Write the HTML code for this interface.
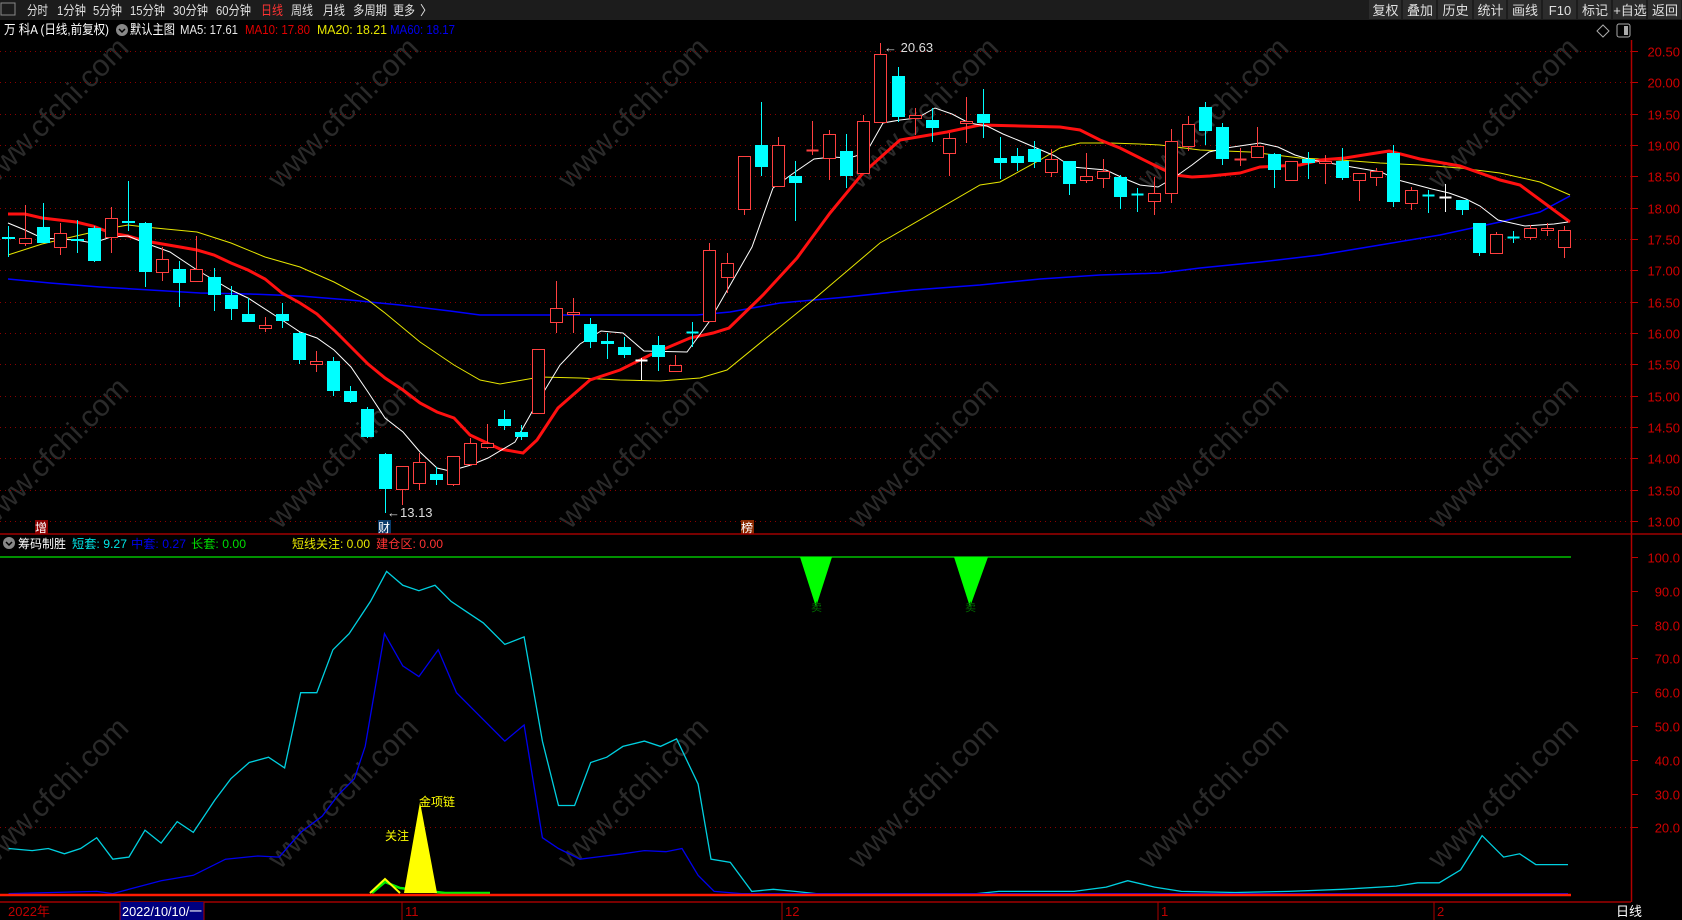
<!DOCTYPE html>
<html><head><meta charset="utf-8">
<style>
html,body{margin:0;padding:0;background:#000;width:1682px;height:920px;overflow:hidden;font-family:"Liberation Sans","Noto Sans CJK SC",sans-serif;}
svg{display:block}
</style></head>
<body>
<svg id="s" width="1682" height="920" xmlns="http://www.w3.org/2000/svg" font-family="Liberation Sans, Noto Sans CJK SC, sans-serif">
<rect width="1682" height="920" fill="#000"/>
<g id="wm" fill="#2a2a2a" font-size="30"></g>
<rect x="0" y="0" width="1682" height="20" fill="#1c1c1c"/>
<g font-size="13" fill="#e0e0e0" lengthAdjust="spacingAndGlyphs">
<rect x="1" y="3" width="14" height="12" fill="none" stroke="#888" stroke-width="1"/>
<text x="27" y="15" textLength="21" lengthAdjust="spacingAndGlyphs">分时</text>
<text x="57" y="15" textLength="29" lengthAdjust="spacingAndGlyphs">1分钟</text>
<text x="93" y="15" textLength="29" lengthAdjust="spacingAndGlyphs">5分钟</text>
<text x="130" y="15" textLength="35" lengthAdjust="spacingAndGlyphs">15分钟</text>
<text x="173" y="15" textLength="35" lengthAdjust="spacingAndGlyphs">30分钟</text>
<text x="216" y="15" textLength="35" lengthAdjust="spacingAndGlyphs">60分钟</text>
<text x="261" y="15" fill="#ff3333" textLength="22" lengthAdjust="spacingAndGlyphs">日线</text>
<text x="291" y="15" textLength="22" lengthAdjust="spacingAndGlyphs">周线</text>
<text x="323" y="15" textLength="22" lengthAdjust="spacingAndGlyphs">月线</text>
<text x="353" y="15" textLength="34" lengthAdjust="spacingAndGlyphs">多周期</text>
<text x="393" y="15" textLength="22" lengthAdjust="spacingAndGlyphs">更多</text>
<text x="420" y="15">〉</text>
</g>
<g id="btns" font-size="13" fill="#e0e0e0"></g>
<g font-size="13">
<text x="4" y="34" fill="#fff" textLength="105" lengthAdjust="spacingAndGlyphs">万 科A (日线,前复权)</text>
<circle cx="122" cy="30" r="6" fill="#888"/><path d="M119 29 l3 3 l3 -3" stroke="#000" stroke-width="1.5" fill="none"/>
<text x="130" y="34" fill="#fff" textLength="45" lengthAdjust="spacingAndGlyphs">默认主图</text>
<text x="180" y="34" fill="#e8e8e8" textLength="58" lengthAdjust="spacingAndGlyphs">MA5: 17.61</text>
<text x="245" y="34" fill="#e00000" textLength="65" lengthAdjust="spacingAndGlyphs">MA10: 17.80</text>
<text x="317" y="34" fill="#e6e600" textLength="70" lengthAdjust="spacingAndGlyphs">MA20: 18.21</text>
<text x="390" y="34" fill="#0000ee" textLength="65" lengthAdjust="spacingAndGlyphs">MA60: 18.17</text>
</g>
<path d="M1603 25 l6 6 l-6 6 l-6 -6z" fill="none" stroke="#aaa"/>
<rect x="1617" y="24" width="13" height="13" rx="2" fill="none" stroke="#aaa"/><rect x="1624" y="26" width="4" height="9" fill="#aaa"/>
<g id="grid"></g>
<g id="axis"></g>
<g id="mas" fill="none"></g>
<g id="cand"></g>
<g id="low"></g>
<text x="884" y="52" font-size="13" fill="#ddd">← 20.63</text>
<text x="387" y="517" font-size="13" fill="#ddd">←13.13</text>
<rect x="35" y="520" width="13" height="14" fill="#8b0000"/><text x="35" y="532" font-size="12" fill="#fff">增</text>
<rect x="378" y="520" width="13" height="14" fill="#0a3a6a"/><text x="378" y="532" font-size="12" fill="#fff">财</text>
<rect x="741" y="520" width="13" height="14" fill="#8b2a00"/><text x="741" y="532" font-size="12" fill="#fff">榜</text>
<line x1="0" y1="534" x2="1682" y2="534" stroke="#a00000" stroke-width="1.5"/>
<g font-size="12">
<circle cx="9" cy="543" r="6" fill="#888"/><path d="M6 542 l3 3 l3 -3" stroke="#000" stroke-width="1.5" fill="none"/>
<text x="18" y="548" fill="#fff" textLength="48" lengthAdjust="spacingAndGlyphs">筹码制胜</text>
<text x="72" y="548" fill="#00e5e5" textLength="55" lengthAdjust="spacingAndGlyphs">短套: 9.27</text>
<text x="131" y="548" fill="#0000ee" textLength="55" lengthAdjust="spacingAndGlyphs">中套: 0.27</text>
<text x="191" y="548" fill="#00dd00" textLength="55" lengthAdjust="spacingAndGlyphs">长套: 0.00</text>
<text x="292" y="548" fill="#e6e600" textLength="78" lengthAdjust="spacingAndGlyphs">短线关注: 0.00</text>
<text x="376" y="548" fill="#ff3333" textLength="67" lengthAdjust="spacingAndGlyphs">建仓区: 0.00</text>
</g>
<line x1="0" y1="902" x2="1631" y2="902" stroke="#a00000" stroke-width="1.5"/>
<g font-size="13">
<text x="8" y="916" fill="#c00000">2022年</text>
<rect x="120" y="902" width="84" height="18" fill="#000080"/>
<line x1="120" y1="902" x2="120" y2="920" stroke="#a00"/><line x1="204" y1="902" x2="204" y2="920" stroke="#a00"/>
<text x="122" y="916" fill="#fff" textLength="80" lengthAdjust="spacingAndGlyphs">2022/10/10/一</text>
<text x="405" y="916" fill="#c00000">11</text><line x1="402" y1="902" x2="402" y2="920" stroke="#a00"/>
<text x="785" y="916" fill="#c00000">12</text><line x1="782" y1="902" x2="782" y2="920" stroke="#a00"/>
<text x="1161" y="916" fill="#c00000">1</text><line x1="1158" y1="902" x2="1158" y2="920" stroke="#a00"/>
<text x="1437" y="916" fill="#c00000">2</text><line x1="1434" y1="902" x2="1434" y2="920" stroke="#a00"/>
<text x="1616" y="916" fill="#fff">日线</text>
</g>
</svg>
<script>
var NS="http://www.w3.org/2000/svg";
function el(p,t,a,txt){var e=document.createElementNS(NS,t);for(var k in a)e.setAttribute(k,a[k]);if(txt!==undefined)e.textContent=txt;document.getElementById(p).appendChild(e);return e;}
var b=[["复权",1369,1402],["叠加",1403,1437],["历史",1438,1473],["统计",1474,1507],["画线",1508,1542],["F10",1543,1577],["标记",1578,1612],["+自选",1613,1647],["返回",1648,1682]];
b.forEach(function(x){el("btns","rect",{x:x[1],y:0,width:x[2]-x[1]-1,height:19,fill:"#2c2c2c"});el("btns","text",{x:(x[1]+x[2])/2,y:15,"text-anchor":"middle"},x[0]);});
for(var i=0;i<6;i++)for(var j=0;j<3;j++){var wx=-10+i*290,wy=190+j*340;el("wm","text",{x:wx,y:wy,transform:"rotate(-45 "+wx+" "+wy+")"},"www.cfchi.com");}
function py(p){return 51+(20.5-p)*62.67;}
for(var p=20.5;p>=12.99;p-=0.5){var y=Math.round(py(p))+0.5;
 el("grid","line",{x1:0,y1:y,x2:1631,y2:y,stroke:"#8b0000","stroke-dasharray":"1,4"});
 el("axis","line",{x1:1631,y1:y,x2:1638,y2:y,stroke:"#c00000"});
 el("axis","text",{x:1680,y:y+5,"font-size":"13",fill:"#d00000","text-anchor":"end"},p.toFixed(2));}
function vy(v){return 895-3.38*v;}
for(var v=100;v>=20;v-=10){var y=Math.round(vy(v))+0.5;
 el("axis","line",{x1:1631,y1:y,x2:1638,y2:y,stroke:"#c00000"});
 el("axis","text",{x:1680,y:y+5,"font-size":"13",fill:"#d00000","text-anchor":"end"},v.toFixed(1));}
el("grid","line",{x1:0,y1:827.5,x2:1631,y2:827.5,stroke:"#8b0000","stroke-dasharray":"1,4"});
el("axis","line",{x1:1631.5,y1:40,x2:1631.5,y2:902,stroke:"#b00000","stroke-width":"1.5"});
function pl(pts,c,w){el("mas","polyline",{points:pts.map(function(a){return a.join(",")}).join(" "),stroke:c,"stroke-width":w,fill:"none"});}
pl([[8,279],[50,283],[100,287],[200,293],[250,294],[300,296],[350,300],[400,305],[450,311],[480,315],[697,315],[730,312],[780,303],[847,297],[913,290],[980,285],[1040,279],[1100,275],[1160,273],[1200,268],[1260,262],[1320,255],[1380,245],[1440,235],[1500,222],[1540,212],[1570,196]],"#0000ff",1.5);
pl([[8,255],[42,244],[76,236],[111,228],[128,225],[145,227],[197,232],[231,243],[265,257],[300,267],[334,282],[368,300],[385,313],[420,342],[454,365],[480,380],[500,384],[540,377],[580,378],[620,380],[660,381],[700,378],[727,370],[770,335],[813,300],[880,243],[980,185],[1000,182],[1040,160],[1060,148],[1080,143],[1110,143],[1140,144],[1160,145],[1200,150],[1250,152],[1300,158],[1340,160],[1380,163],[1420,165],[1460,168],[1500,173],[1540,182],[1570,195]],"#e6e600",1);
pl([[8,214],[25,214],[42,218],[76,222],[93,226],[111,233],[128,236],[145,241],[180,247],[197,250],[214,255],[231,263],[248,270],[265,279],[282,293],[300,303],[317,314],[334,330],[351,347],[368,364],[385,378],[403,390],[420,403],[437,412],[454,418],[470,435],[500,449],[523,453],[537,440],[558,408],[590,380],[620,370],[650,355],[690,338],[713,333],[729,328],[763,295],[797,258],[830,213],[863,173],[900,140],[947,132],[980,125],[1020,126],[1060,127],[1080,130],[1100,140],[1120,148],[1140,158],[1160,168],[1175,175],[1192,177],[1210,176],[1240,173],[1260,167],[1300,165],[1320,160],[1345,158],[1370,154],[1389,151],[1420,159],[1460,166],[1500,180],[1520,185],[1547,205],[1570,222]],"#ff1010",3);
pl([[8,223],[25,230],[42,238],[76,240],[93,243],[111,237],[128,236],[145,243],[170,252],[197,270],[214,280],[231,290],[248,298],[282,320],[300,332],[317,338],[334,350],[351,367],[368,392],[385,418],[403,432],[420,452],[437,468],[450,471],[471,465],[488,458],[515,442],[537,403],[560,365],[580,344],[601,331],[623,333],[644,351],[687,352],[709,322],[752,247],[773,188],[795,172],[814,159],[832,157],[849,158],[866,153],[883,123],[900,120],[917,118],[935,108],[952,114],[969,123],[987,126],[1003,134],[1020,141],[1055,156],[1072,167],[1106,170],[1123,178],[1140,185],[1158,187],[1175,177],[1192,165],[1209,152],[1226,148],[1260,143],[1278,147],[1295,155],[1312,160],[1346,166],[1381,172],[1398,180],[1432,189],[1449,193],[1466,199],[1480,206],[1498,220],[1525,226],[1554,224],[1568,222]],"#ffffff",1);
var C=[["c",237,239,226,257],["r",238,243,205,246],["c",227,243,203,243],["r",233,247,223,255],["c",239,241,220,253],["c",228,261,226,262],["r",218,237,207,253],["c",221,223,181,231],["c",223,272,222,287],["r",259,272,247,281],["c",269,283,261,307],["r",269,281,236,281],["c",277,295,268,311],["c",295,309,286,320],["c",314,322,298,322],["r",325,328,317,332],["c",314,321,303,328],["c",333,360,332,364],["r",361,364,351,372],["c",361,391,357,396],["c",391,402,386,403],["c",409,437,407,438],["c",454,489,453,513],["r",466,489,466,505],["r",462,483,453,490],["c",474,480,467,485],["r",456,484,456,486],["r",443,464,438,466],["r",443,447,424,449],["c",419,426,410,430],["c",432,437,425,440],["r",349,413,349,413],["r",308,322,281,333],["r",312,314,298,333],["c",324,342,318,348],["c",341,344,333,359],["c",347,355,337,358],["w",360,360,358,380],["c",345,357,336,371],["r",365,371,355,372],["c",332,332,322,347],["r",250,321,243,321],["r",263,277,253,293],["r",156,209,156,215],["c",145,167,102,176],["r",145,186,137,187],["c",176,183,161,221],["r",150,150,121,155],["r",134,158,130,180],["c",151,176,134,188],["r",121,173,115,173],["r",54,122,43,122],["c",76,117,67,122],["r",115,118,108,135],["c",120,128,108,142],["r",138,153,133,176],["r",121,123,97,143],["c",114,123,89,138],["c",158,163,137,179],["c",156,163,148,171],["c",149,162,141,168],["r",159,172,149,177],["c",161,184,161,195],["r",176,180,153,183],["r",171,178,159,188],["c",177,197,175,209],["c",194,194,188,212],["r",193,201,177,215],["r",141,193,129,203],["r",124,146,116,151],["c",107,131,102,145],["c",127,159,123,165],["r",159,159,148,166],["r",146,157,127,157],["c",154,170,153,188],["r",161,180,161,180],["c",159,163,152,179],["r",161,163,155,184],["c",161,178,148,180],["r",173,180,173,201],["r",171,177,168,186],["c",153,202,145,207],["r",190,203,187,210],["c",195,195,190,213],["w",197,197,184,212],["c",200,210,200,215],["c",223,253,223,256],["r",234,253,232,253],["c",237,237,231,243],["r",228,237,225,240],["r",228,230,223,236],["r",230,247,226,258]];
C.forEach(function(c,i){var x=Math.round(8.3+17.1*i)+0.5;var col=c[0]=="r"?"#ff4040":(c[0]=="c"?"#00ffff":"#ffffff");
 el("cand","line",{x1:x,y1:c[3],x2:x,y2:c[4],stroke:col});
 if(c[2]-c[1]<2){el("cand","line",{x1:x-6,y1:c[1]+0.5,x2:x+6,y2:c[1]+0.5,stroke:col,"stroke-width":2});}
 else if(c[0]=="r"){el("cand","rect",{x:x-6,y:c[1]+0.5,width:12,height:c[2]-c[1],fill:"#000",stroke:col});}
 else el("cand","rect",{x:x-6.5,y:c[1],width:13,height:c[2]-c[1],fill:col});});
var S=1.074;
function lp(pts,c,w){el("low","polyline",{points:pts.map(function(a){return (a[0]*S).toFixed(1)+","+(a[1]*S).toFixed(1)}).join(" "),stroke:c,"stroke-width":w,fill:"none"});}
el("low","line",{x1:0,y1:557,x2:1571,y2:557,stroke:"#00c000","stroke-width":1.5});
lp([[8,790],[30,792],[45,790],[60,795],[75,790],[90,780],[105,800],[120,798],[135,773],[150,785],[165,765],[180,775],[200,745],[215,725],[232,710],[250,705],[265,715],[280,645],[295,645],[310,605],[325,590],[345,560],[360,532],[375,545],[390,550],[405,545],[420,560],[435,570],[450,580],[470,600],[488,593],[505,690],[520,750],[535,750],[550,710],[565,705],[580,695],[600,690],[615,695],[630,688],[650,730],[662,800],[680,803],[700,830],[720,828],[740,830],[760,832],[800,833],[900,833],[930,830],[970,830],[1000,830],[1030,826],[1050,820],[1075,826],[1100,830],[1150,831],[1200,830],[1250,828],[1300,825],[1320,822],[1340,822],[1360,810],[1380,778],[1400,798],[1415,795],[1430,805],[1460,805]],"#00d0e0",1.3);
lp([[8,832],[90,830],[105,832],[120,828],[150,820],[180,815],[210,800],[240,797],[260,798],[280,775],[300,760],[315,740],[330,725],[340,695],[358,590],[375,620],[390,630],[408,605],[425,645],[445,665],[470,690],[488,675],[505,780],[520,790],[540,800],[555,798],[580,795],[600,792],[620,793],[635,790],[650,815],[665,830],[690,832],[1460,832]],"#0000ee",1.3);
el("low","polyline",{points:"372,893 385,882 400,888 445,893 490,893",stroke:"#00ee00","stroke-width":2.5,fill:"none"});
el("low","polyline",{points:"370,893 385,879 400,893",stroke:"#ffff00","stroke-width":2,fill:"none"});
el("low","polygon",{points:"404,893 420,802 437,893",fill:"#ffff00"});
el("low","text",{x:385,y:840,"font-size":"12",fill:"#ffff00"},"关注");
el("low","text",{x:419,y:806,"font-size":"12",fill:"#ffff00"},"金项链");
el("low","polygon",{points:"800,557 832,557 816,607",fill:"#00ff00"});
el("low","polygon",{points:"954,557 988,557 970,607",fill:"#00ff00"});
el("low","text",{x:811,y:611,"font-size":"11",fill:"#006600"},"卖");
el("low","text",{x:965,y:611,"font-size":"11",fill:"#006600"},"卖");
el("low","line",{x1:0,y1:895,x2:1571,y2:895,stroke:"#ff1a00","stroke-width":2.5});
</script>
</body></html>
